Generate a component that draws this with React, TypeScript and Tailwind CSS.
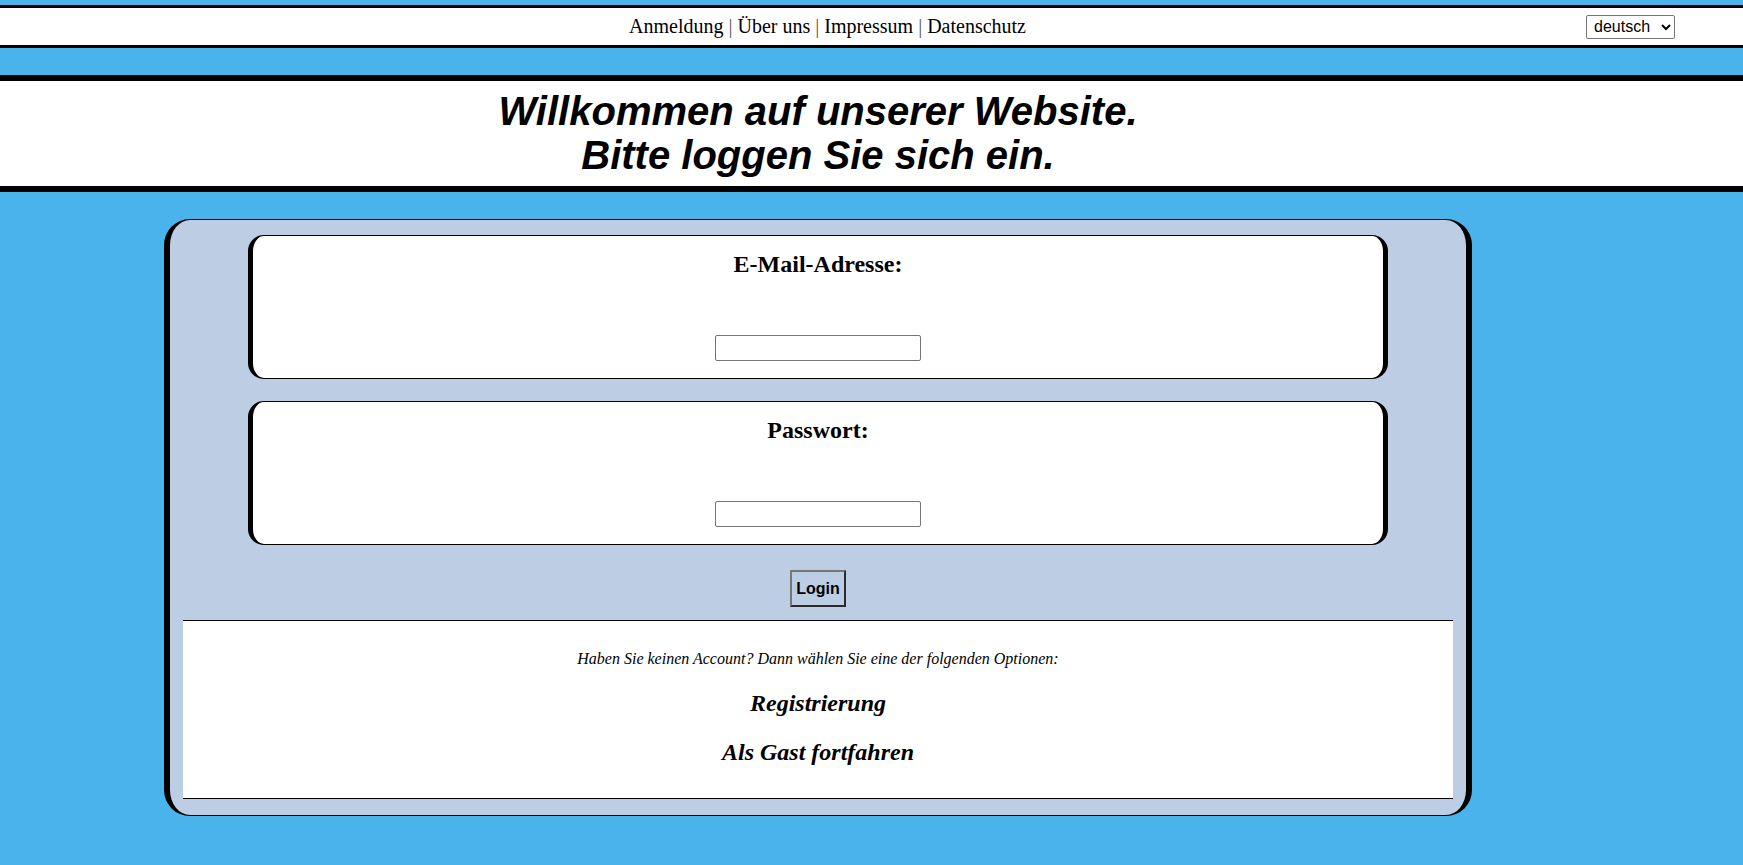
import { useState } from "react";

const serif = "font-['Liberation_Serif','Times_New_Roman',serif]";
const sans = "font-['Liberation_Sans',Arial,sans-serif]";

function FieldBox({ label, type }: { label: string; type: string }) {
  return (
    <div className="mx-[78px] flex flex-col items-center rounded-[16px] border-x-[5px] border-y border-black bg-white pt-[15px] pb-[17px]">
      <h2 className={`${serif} text-[24px] leading-[27px] font-bold text-black`}>{label}</h2>
      <input
        type={type}
        className="mt-[57px] h-[26px] w-[206px] rounded-[2px] border border-[#767676] bg-white px-[2px] text-[13px]"
      />
    </div>
  );
}

export default function App() {
  const [lang, setLang] = useState("de");

  return (
    <div className="min-h-screen bg-[#4ab3ec] pt-[5px] pb-[40px]">
      {/* top nav */}
      <div className="flex h-[43px] items-center border-y-[3px] border-black bg-white">
        <nav className={`${serif} ml-[629px] text-[20px] leading-[23px] text-black`}>
          <a href="#">Anmeldung</a>
          <span className="text-[#555]"> | </span>
          <a href="#">Über uns</a>
          <span className="text-[#555]"> | </span>
          <a href="#">Impressum</a>
          <span className="text-[#555]"> | </span>
          <a href="#">Datenschutz</a>
        </nav>
        <select
          value={lang}
          onChange={(e) => setLang(e.target.value)}
          className={`${sans} mr-[68px] ml-auto h-[24px] w-[89px] rounded-[2px] border border-[#767676] bg-white pl-[3px] text-[16px] text-black`}
        >
          <option value="de">deutsch</option>
          <option value="en">english</option>
        </select>
      </div>

      {/* welcome header */}
      <div className="mt-[27px] border-y-[6px] border-black bg-white pt-[8px] pb-[9px]">
        <h1 className={`${sans} w-[1636px] text-center text-[40px] leading-[44px] font-bold italic text-black`}>
          Willkommen auf unserer Website.
          <br />
          Bitte loggen Sie sich ein.
        </h1>
      </div>

      {/* login card */}
      <div className="w-[1636px]">
        <div className="mx-auto mt-[27px] flex w-[1308px] flex-col rounded-[26px] border-x-[6px] border-y border-black bg-[#bdcde3] pt-[15px] pb-[16px]">
          <FieldBox label="E-Mail-Adresse:" type="email" />
          <div className="h-[22px]" />
          <FieldBox label="Passwort:" type="password" />

          <button
            className={`${sans} mx-auto mt-[25px] h-[37px] w-[56px] border-2 border-t-[#767676] border-r-[#2b2b2b] border-b-[#2b2b2b] border-l-[#767676] text-[16px] font-bold text-black`}
          >
            Login
          </button>

          <div className={`${serif} mx-[13px] mt-[13px] flex flex-col items-center border-y border-black bg-white pt-[29px] pb-[32px] text-black`}>
            <p className="text-[16px] leading-[18px] italic">
              Haben Sie keinen Account? Dann wählen Sie eine der folgenden Optionen:
            </p>
            <a href="#" className="mt-[22px] text-[24px] leading-[27px] font-bold italic">
              Registrierung
            </a>
            <a href="#" className="mt-[22px] text-[24px] leading-[27px] font-bold italic">
              Als Gast fortfahren
            </a>
          </div>
        </div>
      </div>
    </div>
  );
}
